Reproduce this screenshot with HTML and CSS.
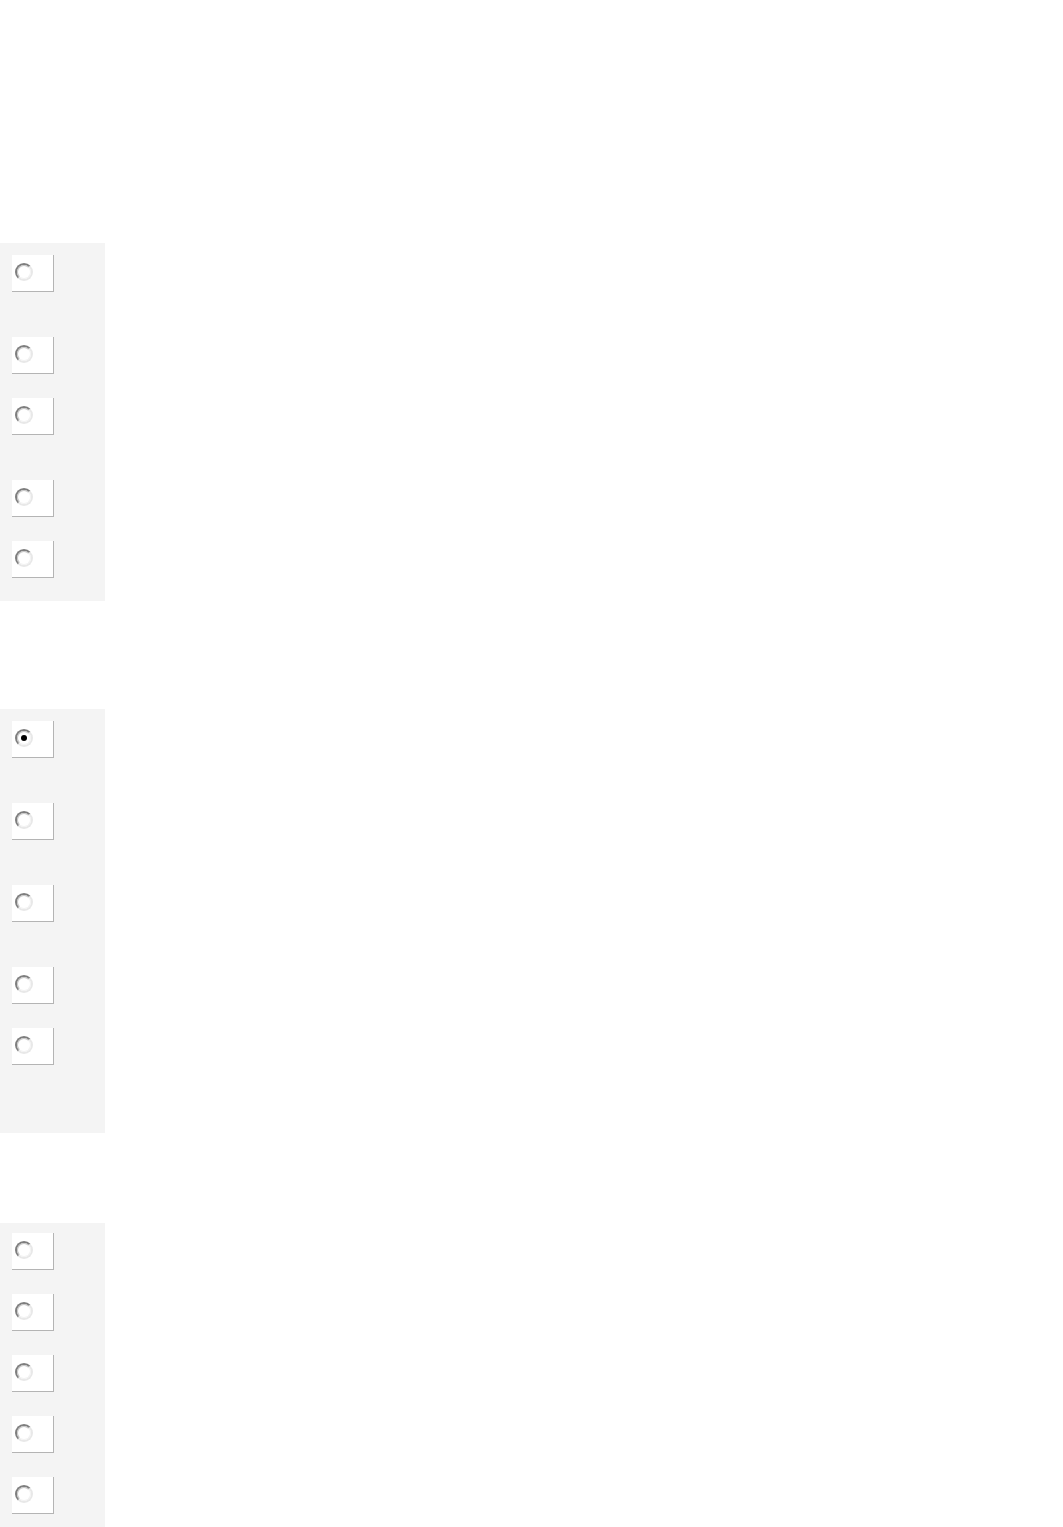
FILE: index.html
```html
<!DOCTYPE html>
<html>
<head>
<meta charset="utf-8">
<link rel="stylesheet" href="styles.css">
</head>
<body>
<div class="page">
  <div class="panel p1">
    <div class="opt gap-l"><span class="radio"></span></div>
    <div class="opt gap-s"><span class="radio"></span></div>
    <div class="opt gap-l"><span class="radio"></span></div>
    <div class="opt gap-s"><span class="radio"></span></div>
    <div class="opt"><span class="radio"></span></div>
  </div>
  <div class="panel p2">
    <div class="opt gap-l"><span class="radio checked"></span></div>
    <div class="opt gap-l"><span class="radio"></span></div>
    <div class="opt gap-l"><span class="radio"></span></div>
    <div class="opt gap-s"><span class="radio"></span></div>
    <div class="opt"><span class="radio"></span></div>
  </div>
  <div class="panel p3">
    <div class="opt gap-s"><span class="radio"></span></div>
    <div class="opt gap-s"><span class="radio"></span></div>
    <div class="opt gap-s"><span class="radio"></span></div>
    <div class="opt gap-s"><span class="radio"></span></div>
    <div class="opt"><span class="radio"></span></div>
  </div>
</div>
</body>
</html>
```
FILE: styles.css
```css
html, body { margin: 0; padding: 0; background: #ffffff; }
.page { display: flex; flex-direction: column; padding-top: 243px; }
.panel { width: 105px; background: #f4f4f4; display: flex; flex-direction: column; box-sizing: border-box; padding-left: 12px; }
.p1 { padding-top: 12px; padding-bottom: 23px; margin-bottom: 108px; }
.p2 { padding-top: 12px; padding-bottom: 68px; margin-bottom: 90px; }
.p3 { padding-top: 10px; padding-bottom: 13px; }
.opt { width: 41px; height: 36px; background: #ffffff; border-right: 1px solid #b4b4b4; border-bottom: 1px solid #b4b4b4; position: relative; }
.gap-l { margin-bottom: 45px; }
.gap-s { margin-bottom: 24px; }
.radio { position: absolute; left: 3px; top: 8px; width: 18px; height: 18px; border-radius: 50%; box-sizing: border-box; border: 2px solid; border-color: #7e7e7e #e8e8e8 #e8e8e8 #7e7e7e; background: #ffffff; }
.radio::before { content: ""; position: absolute; inset: 0; border-radius: 50%; border: 1px solid; border-color: #c4c4c4 #f2f2f2 #f2f2f2 #c4c4c4; }
.radio.checked::after { content: ""; position: absolute; left: 4px; top: 4px; width: 6px; height: 6px; border-radius: 50%; background: #000; }
```
